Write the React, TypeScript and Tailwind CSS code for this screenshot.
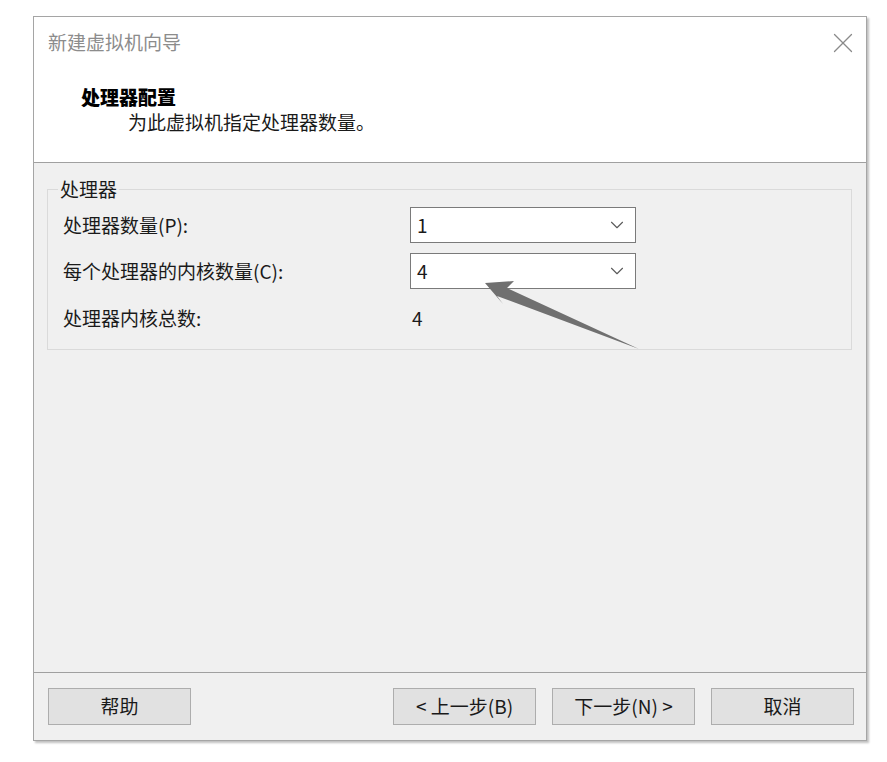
import { ChevronDown, X } from "lucide-react";

const FONT = {
  fontFamily: '"Noto Sans CJK SC", "Microsoft YaHei", "Liberation Sans", sans-serif',
};

type ComboProps = {
  value: string;
};

function Combo({ value }: ComboProps) {
  return (
    <div className="flex h-[36px] w-[226px] items-center justify-between border border-[#7a7a7a] bg-white pl-[6px] pr-[7px]">
      <span className="text-[19px] text-[#1a1a1a]">{value}</span>
      <ChevronDown size={22} strokeWidth={1.2} className="text-[#5a5a5a]" />
    </div>
  );
}

function WizardButton({ children }: { children: React.ReactNode }) {
  return (
    <button
      type="button"
      className="flex h-[37px] w-[143px] items-center justify-center border border-[#adadad] bg-[#e1e1e1] text-[19px] text-[#1a1a1a]"
    >
      {children}
    </button>
  );
}

export default function App() {
  return (
    <div className="relative h-[762px] w-[887px] bg-white" style={FONT}>
      <div className="absolute left-[33px] top-[16px] flex h-[725px] w-[834px] flex-col border border-[#a5a5a5] shadow-[2px_2px_2px_rgba(0,0,0,0.25)]">
        {/* header */}
        <div className="flex h-[146px] flex-col border-b border-[#a0a0a0] bg-white">
          <div className="flex h-[51px] items-center justify-between pl-[14px] pr-[6px]">
            <span className="text-[19px] text-[#8c8c8c]">新建虚拟机向导</span>
            <X size={34} strokeWidth={0.9} className="text-[#8a8a8a]" />
          </div>
          <div className="mt-[16px] pl-[47px] text-[19px] font-black leading-[25px] text-black">
            处理器配置
          </div>
          <div className="pl-[94px] text-[19px] leading-[25px] text-[#1a1a1a]">
            为此虚拟机指定处理器数量。
          </div>
        </div>

        {/* body */}
        <div className="flex flex-1 flex-col bg-[#f0f0f0] pl-[13px] pr-[14px] pt-[26px]">
          <fieldset className="relative h-[161px] border border-[#dadada] pl-[15px] pt-[17px]">
            <legend className="absolute left-[10px] top-[-14px] bg-[#f0f0f0] px-[2px] text-[19px] leading-[26px] text-[#1a1a1a]">
              处理器
            </legend>
            <div className="grid grid-cols-[347px_226px] items-center gap-y-[10px] text-[19px] text-[#1a1a1a]">
              <span>处理器数量(P):</span>
              <Combo value="1" />
              <span>每个处理器的内核数量(C):</span>
              <Combo value="4" />
              <span className="mt-[5px]">处理器内核总数:</span>
              <span className="mt-[5px] pl-[2px]">4</span>
            </div>
          </fieldset>
        </div>

        {/* footer */}
        <div className="flex h-[68px] items-start border-t border-[#a0a0a0] bg-[#f0f0f0] pl-[14px] pr-[12px] pt-[15px]">
          <WizardButton>帮助</WizardButton>
          <div className="ml-auto flex gap-[16px]">
            <WizardButton>&lt; 上一步(B)</WizardButton>
            <WizardButton>下一步(N) &gt;</WizardButton>
            <WizardButton>取消</WizardButton>
          </div>
        </div>
      </div>

      {/* annotation arrow */}
      <svg
        className="pointer-events-none absolute left-0 top-0"
        width="887"
        height="762"
        viewBox="0 0 887 762"
      >
        <polygon
          points="485,283 514,281 507,288 639,349 497,296 503,304"
          fill="#707070"
        />
      </svg>
    </div>
  );
}
